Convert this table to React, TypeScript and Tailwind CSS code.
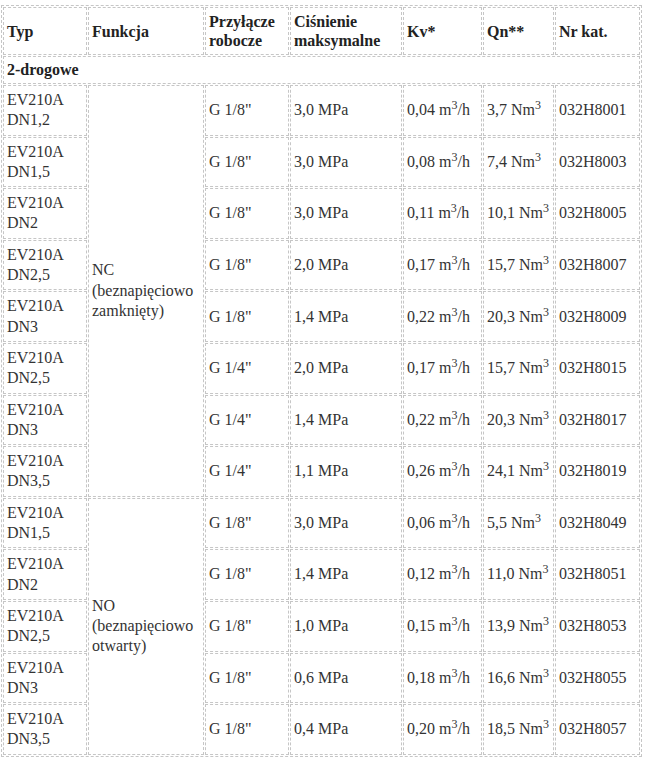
import React from 'react';

type Row = { typ: string; dn: string; conn: string; p: string; kv: string; qn: string; nr: string };

const rows: Row[] = [
  { typ: 'EV210A', dn: 'DN1,2', conn: 'G 1/8"', p: '3,0 MPa', kv: '0,04', qn: '3,7', nr: '032H8001' },
  { typ: 'EV210A', dn: 'DN1,5', conn: 'G 1/8"', p: '3,0 MPa', kv: '0,08', qn: '7,4', nr: '032H8003' },
  { typ: 'EV210A', dn: 'DN2', conn: 'G 1/8"', p: '3,0 MPa', kv: '0,11', qn: '10,1', nr: '032H8005' },
  { typ: 'EV210A', dn: 'DN2,5', conn: 'G 1/8"', p: '2,0 MPa', kv: '0,17', qn: '15,7', nr: '032H8007' },
  { typ: 'EV210A', dn: 'DN3', conn: 'G 1/8"', p: '1,4 MPa', kv: '0,22', qn: '20,3', nr: '032H8009' },
  { typ: 'EV210A', dn: 'DN2,5', conn: 'G 1/4"', p: '2,0 MPa', kv: '0,17', qn: '15,7', nr: '032H8015' },
  { typ: 'EV210A', dn: 'DN3', conn: 'G 1/4"', p: '1,4 MPa', kv: '0,22', qn: '20,3', nr: '032H8017' },
  { typ: 'EV210A', dn: 'DN3,5', conn: 'G 1/4"', p: '1,1 MPa', kv: '0,26', qn: '24,1', nr: '032H8019' },
  { typ: 'EV210A', dn: 'DN1,5', conn: 'G 1/8"', p: '3,0 MPa', kv: '0,06', qn: '5,5', nr: '032H8049' },
  { typ: 'EV210A', dn: 'DN2', conn: 'G 1/8"', p: '1,4 MPa', kv: '0,12', qn: '11,0', nr: '032H8051' },
  { typ: 'EV210A', dn: 'DN2,5', conn: 'G 1/8"', p: '1,0 MPa', kv: '0,15', qn: '13,9', nr: '032H8053' },
  { typ: 'EV210A', dn: 'DN3', conn: 'G 1/8"', p: '0,6 MPa', kv: '0,18', qn: '16,6', nr: '032H8055' },
  { typ: 'EV210A', dn: 'DN3,5', conn: 'G 1/8"', p: '0,4 MPa', kv: '0,20', qn: '18,5', nr: '032H8057' },
];

const th = 'border border-dashed border-[#c6c6c6] px-[3px] py-1 text-left align-middle font-bold text-[16px] leading-[19px] text-[#222]';
const td = 'border border-dashed border-[#c6c6c6] px-[3px] py-1 align-middle text-[16px] leading-[20.3px] text-[#333] whitespace-nowrap';
const tdWrap = 'border border-dashed border-[#c6c6c6] px-[3px] py-1 align-middle text-[16px] leading-[20.3px] text-[#333]';

export default function App() {
  return (
    <div className="bg-white pl-px pt-[5px] font-['Liberation_Serif',serif]">
      <table className="w-[641px] table-fixed border-separate border-spacing-[1px] border border-dashed border-[#c6c6c6]">
        <colgroup>
          <col className="w-[84px]" />
          <col className="w-[116px]" />
          <col className="w-[84px]" />
          <col className="w-[112px]" />
          <col className="w-[79px]" />
          <col className="w-[71px]" />
          <col className="w-[85px]" />
        </colgroup>
        <thead>
          <tr>
            <th className={th}>Typ</th>
            <th className={th}>Funkcja</th>
            <th className={th}>Przyłącze robocze</th>
            <th className={th}>Ciśnienie maksymalne</th>
            <th className={th}>Kv*</th>
            <th className={th}>Qn**</th>
            <th className={th}>Nr kat.</th>
          </tr>
        </thead>
        <tbody>
          <tr>
            <td colSpan={7} className="border border-dashed border-[#c6c6c6] px-[3px] py-1 font-bold text-[16px] leading-[18px] text-[#222]">
              2-drogowe
            </td>
          </tr>
          {rows.map((r, i) => (
            <tr key={i}>
              <td className={td}>
                {r.typ}
                <br />
                {r.dn}
              </td>
              {i === 0 && (
                <td rowSpan={8} className={tdWrap}>
                  NC
                  <br />
                  (beznapięciowo zamknięty)
                </td>
              )}
              {i === 8 && (
                <td rowSpan={5} className={tdWrap}>
                  NO
                  <br />
                  (beznapięciowo otwarty)
                </td>
              )}
              <td className={td}>{r.conn}</td>
              <td className={td}>{r.p}</td>
              <td className={td}>
                {r.kv} m<sup>3</sup>/h
              </td>
              <td className={td}>
                {r.qn} Nm<sup>3</sup>
              </td>
              <td className={td}>{r.nr}</td>
            </tr>
          ))}
        </tbody>
      </table>
    </div>
  );
}
